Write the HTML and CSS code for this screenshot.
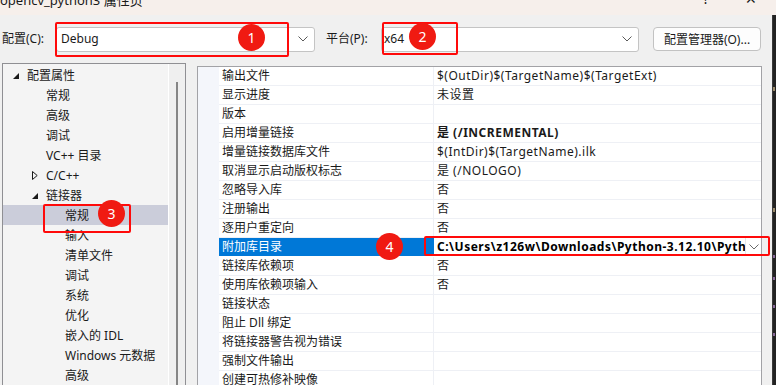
FILE: index.html
```html
<!DOCTYPE html>
<html lang="zh-CN">
<head>
<meta charset="utf-8">
<title>opencv_python3 属性页</title>
<link rel="stylesheet" href="styles.css">
</head>
<body>
<div class="titlebar">
  <span class="title">opencv_python3 属性页</span>
  <span class="tb-help">?</span>
  <span class="tb-close">✕</span>
</div>
<div class="frame">
  <div class="dialog">
    <div class="toolbar">
      <span class="lbl lbl-cfg">配置(C):</span>
      <div class="combo combo-cfg">
        <span class="combo-text">Debug</span>
        <svg class="chev" width="10" height="6" viewBox="0 0 10 6"><polyline points="0.5,0.5 5,5 9.5,0.5" fill="none" stroke="#5a5a5a" stroke-width="1"/></svg>
      </div>
      <span class="lbl lbl-plat">平台(P):</span>
      <div class="combo combo-plat">
        <span class="combo-text">x64</span>
        <svg class="chev" width="10" height="6" viewBox="0 0 10 6"><polyline points="0.5,0.5 5,5 9.5,0.5" fill="none" stroke="#5a5a5a" stroke-width="1"/></svg>
      </div>
      <button class="btn">配置管理器(O)...</button>
    </div>

    <div class="main">
      <div class="tree">
        <ul class="tree-list">
          <li class="node lv0"><span class="tg"><svg width="6" height="6" viewBox="0 0 6 6"><polygon points="6,0 6,6 0,6" fill="#1a1a1a"/></svg></span>配置属性</li>
          <li class="node lv1"><span class="tg"></span>常规</li>
          <li class="node lv1"><span class="tg"></span>高级</li>
          <li class="node lv1"><span class="tg"></span>调试</li>
          <li class="node lv1"><span class="tg"></span>VC++ 目录</li>
          <li class="node lv1"><span class="tg"><svg width="6" height="9" viewBox="0 0 6 9"><polygon points="0.5,0.5 5.2,4.5 0.5,8.5" fill="none" stroke="#1a1a1a" stroke-width="1"/></svg></span>C/C++</li>
          <li class="node lv1"><span class="tg"><svg width="6" height="6" viewBox="0 0 6 6"><polygon points="6,0 6,6 0,6" fill="#1a1a1a"/></svg></span>链接器</li>
          <li class="node lv2 sel"><span class="tg"></span>常规</li>
          <li class="node lv2"><span class="tg"></span>输入</li>
          <li class="node lv2"><span class="tg"></span>清单文件</li>
          <li class="node lv2"><span class="tg"></span>调试</li>
          <li class="node lv2"><span class="tg"></span>系统</li>
          <li class="node lv2"><span class="tg"></span>优化</li>
          <li class="node lv2"><span class="tg"></span>嵌入的 IDL</li>
          <li class="node lv2"><span class="tg"></span>Windows 元数据</li>
          <li class="node lv2"><span class="tg"></span>高级</li>
        </ul>
        <div class="tree-scroll"><div class="thumb"></div></div>
      </div>

      <div class="grid">
        <div class="grid-side"></div>
        <div class="grid-rows">
          <div class="prop"><span class="pn">输出文件</span><span class="pv">$(OutDir)$(TargetName)$(TargetExt)</span></div>
          <div class="prop"><span class="pn">显示进度</span><span class="pv">未设置</span></div>
          <div class="prop"><span class="pn">版本</span><span class="pv"></span></div>
          <div class="prop"><span class="pn">启用增量链接</span><span class="pv bold">是 (/INCREMENTAL)</span></div>
          <div class="prop"><span class="pn">增量链接数据库文件</span><span class="pv">$(IntDir)$(TargetName).ilk</span></div>
          <div class="prop"><span class="pn">取消显示启动版权标志</span><span class="pv">是 (/NOLOGO)</span></div>
          <div class="prop"><span class="pn">忽略导入库</span><span class="pv">否</span></div>
          <div class="prop"><span class="pn">注册输出</span><span class="pv">否</span></div>
          <div class="prop"><span class="pn">逐用户重定向</span><span class="pv">否</span></div>
          <div class="prop active">
            <span class="pn">附加库目录</span>
            <span class="pv bold"><span class="pv-text">C:\Users\z126w\Downloads\Python-3.12.10\Python\libs</span><span class="pv-drop"><svg width="10" height="6" viewBox="0 0 10 6"><polyline points="0.5,0.5 5,5 9.5,0.5" fill="none" stroke="#6a6a6a" stroke-width="1"/></svg></span></span>
          </div>
          <div class="prop"><span class="pn">链接库依赖项</span><span class="pv">否</span></div>
          <div class="prop"><span class="pn">使用库依赖项输入</span><span class="pv">否</span></div>
          <div class="prop"><span class="pn">链接状态</span><span class="pv"></span></div>
          <div class="prop"><span class="pn">阻止 Dll 绑定</span><span class="pv"></span></div>
          <div class="prop"><span class="pn">将链接器警告视为错误</span><span class="pv"></span></div>
          <div class="prop"><span class="pn">强制文件输出</span><span class="pv"></span></div>
          <div class="prop"><span class="pn">创建可热修补映像</span><span class="pv"></span></div>
        </div>
      </div>
    </div>
  </div>
  <div class="edge"></div>
</div>

<!-- annotations drawn over the screenshot -->
<div class="hl hl-1"></div>
<div class="hl hl-2"></div>
<div class="hl hl-3"></div>
<div class="hl hl-4"></div>
<div class="badge b-1">1</div>
<div class="badge b-2">2</div>
<div class="badge b-3">3</div>
<div class="badge b-4">4</div>
</body>
</html>
```

FILE: styles.css
```css
*,*::before,*::after {box-sizing: border-box;}
body {
  margin: 0;
  width: 776px;
  height: 385px;
  overflow: hidden;
  position: relative;
  background: #f0f0f0;
  font-family: "Noto Sans", "Noto Sans CJK SC", sans-serif;
  font-size: 12px;
  color: #1a1a1a;
}

.titlebar {
  height: 15px;
  background: #f6efeb;
  overflow: hidden;
  position: relative;
  font-size: 13px;
  line-height: 16px;
}
.titlebar .title {
  display: block;
  margin-top: -8px;
}
.tb-help, .tb-close {
  position: absolute;
  top: -9px;
  font-size: 14px;
}
.tb-help {left: 703px;}
.tb-close {left: 745px;}

.frame {display: flex; height: 370px;}
.dialog {width: 772px; flex: none;}
.edge {
  flex: none;
  width: 4px;
  background:
    linear-gradient(#8a6a9a 0 0) 1px 240px/2px 3px no-repeat,
    linear-gradient(#8a6a9a 0 0) 1px 262px/2px 3px no-repeat,
    linear-gradient(#8a6a9a 0 0) 1px 290px/2px 3px no-repeat,
    linear-gradient(#8a6a9a 0 0) 1px 318px/2px 3px no-repeat,
    linear-gradient(#9a8a6a 0 0) 1px 72px/2px 4px no-repeat,
    linear-gradient(#9a8a6a 0 0) 1px 193px/2px 4px no-repeat,
    #232323;
  box-shadow: inset 1px 0 0 #3a3a3a;
}

.toolbar {
  display: flex;
  align-items: center;
  height: 48px;
  padding-left: 2px;
}
.lbl {line-height: 16px; flex: none;}
.lbl-cfg {width: 54px;}
.lbl-plat {width: 55px; margin-left: 11px;}
.combo {
  flex: none;
  display: flex;
  align-items: center;
  height: 25px;
  background: #fff;
  border: 1px solid #c4c4c4;
  border-radius: 3px;
  padding: 0 4px 0 4px;
}
.combo-text {flex: 1; line-height: 16px;}
.combo-cfg {width: 259px;}
.combo-plat {width: 258px; padding-left: 2px;}
.chev {margin-right: 2px;}
.btn {
  flex: none;
  margin-left: 14px;
  width: 108px;
  height: 24px;
  background: #fdfdfd;
  border: 1px solid #c2c2c2;
  border-radius: 4px;
  font: inherit;
  color: inherit;
  padding: 0;
}

.main {
  display: flex;
  align-items: flex-start;
  gap: 11px;
  padding-left: 2px;
}
.tree {
  flex: none;
  display: flex;
  width: 184px;
  height: 330px;
  border: 1px solid #8f8f93;
  border-bottom: 0;
  background: #f4f4f4;
}
.tree-list {
  flex: none;
  list-style: none;
  margin: 0;
  padding: 1px 0 0 0;
  width: 165px;
}
.node {
  display: flex;
  align-items: center;
  height: 20px;
  padding-top: 1px;
  line-height: 16px;
  white-space: nowrap;
}
.node.lv0 {padding-left: 7px;}
.node.lv1 {padding-left: 26px;}
.node.lv2 {padding-left: 45px;}
.node.sel {background: #cbcdda;}
.tg {
  flex: none;
  width: 17px;
  display: flex;
  align-items: center;
  padding-left: 3px;
}
.tg svg {display: block;}
.tree-scroll {
  flex: none;
  width: 17px;
  border-left: 1px solid #fff;
  background: #efefef;
  padding: 18px 0 0 7px;
}
.thumb {
  width: 2px;
  height: 100%;
  background: #858585;
}

.grid {
  flex: none;
  display: flex;
  margin-top: 3px;
  width: 565px;
  height: 330px;
  border: 1px solid #a2a2a6;
  border-bottom: 0;
  background: #fff;
  overflow: hidden;
}
.grid-side {
  flex: none;
  width: 21px;
  background: #f4f6fb;
}
.grid-rows {flex: 1; min-width: 0;}
.prop {
  display: flex;
  height: 19px;
  border-bottom: 1px solid #eef0f5;
  line-height: 18px;
}
.pn {
  flex: none;
  width: 215px;
  padding-left: 3px;
  border-right: 1px solid #eef0f5;
  white-space: nowrap;
}
.pv {
  flex: 1;
  min-width: 0;
  display: flex;
  padding-left: 3px;
  white-space: nowrap;
  overflow: hidden;
  letter-spacing: 0.5px;
}
.bold {font-weight: bold;}
.prop.active {border-bottom-color: #fff;}
.prop.active .pn {background: #0078d7; color: #fff; border-right-color: #0078d7;}
.pv-text {flex: 1; min-width: 0; overflow: hidden; color: #000;}
.pv-drop {
  flex: none;
  width: 16px;
  display: flex;
  align-items: center;
  justify-content: center;
  border-left: 1px solid #e6e6e6;
}

.hl {
  position: absolute;
  border: 2px solid #ff0a0a;
  border-radius: 2px;
}
.hl-1 {left: 55px; top: 22px; width: 234px; height: 35px;}
.hl-2 {left: 382px; top: 22px; width: 76px; height: 33px;}
.hl-3 {left: 43px; top: 204px; width: 88px; height: 29px;}
.hl-4 {left: 424px; top: 236px; width: 346px; height: 20px;}
.badge {
  position: absolute;
  width: 27px;
  height: 27px;
  border-radius: 50%;
  background: #f01a12;
  color: #fff;
  font-size: 14px;
  line-height: 27px;
  text-align: center;
}
.b-1 {left: 238px; top: 24px;}
.b-2 {left: 409px; top: 23px;}
.b-3 {left: 98px; top: 200px;}
.b-4 {left: 376px; top: 233px;}
```
